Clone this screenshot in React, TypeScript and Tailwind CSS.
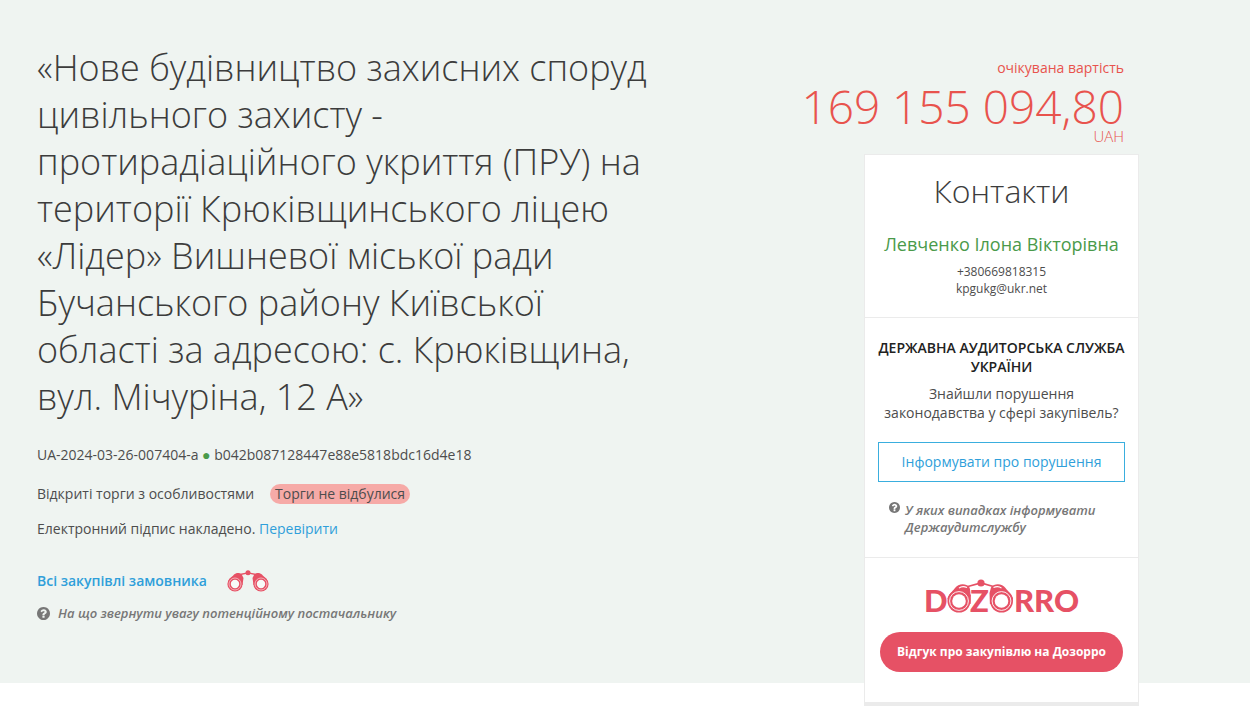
import React from 'react';

const CORAL = '#e65165';

function Lens({ cx, cy, flip = false }: { cx: number; cy: number; flip?: boolean }) {
  return (
    <g transform={`translate(${cx} ${cy}) scale(${flip ? -1 : 1} 1)`}>
      <path
        d="M-11.5 -2 C-11 -6 -7 -9 -4 -13 C-1 -17.5 7 -18.5 10.5 -13.5 L12 -8 L11.600 3 Z"
        fill={CORAL}
      />
      <path d="M0 -12.800 C2 -14.600 5 -14.800 8 -13.500" fill="none" stroke="#ffffff" strokeWidth="1.1" />
      <circle r="11.5" fill={CORAL} />
      <circle r="9.4" fill="none" stroke="#ffffff" strokeWidth="0.9" />
      <circle r="6.8" fill="#ffffff" />
    </g>
  );
}

function DozorroLogo() {
  return (
    <svg width="156" height="44" viewBox="0 0 156 44" className="-mb-2" role="img" aria-label="Dozorro">
      <path d="M42 9 L57 5 L71 9" fill="none" stroke={CORAL} strokeWidth="1.8" />
      <circle cx="57" cy="5" r="3.6" fill={CORAL} />
      <Lens cx={35} cy={23} />
      <Lens cx={77.5} cy={23} flip />
      <g fill={CORAL} fontFamily="Lato, sans-serif" fontWeight="900" fontSize="31">
        <text x="0" y="34">D</text>
        <text x="46" y="34" stroke="#ffffff" strokeWidth="1.6" paintOrder="stroke">Z</text>
        <text x="90" y="34">R</text>
        <text x="110" y="34">R</text>
        <text x="130" y="34">O</text>
      </g>
    </svg>
  );
}

function Binoculars() {
  return (
    <svg width="42" height="22" viewBox="0 0 42 22" aria-hidden="true">
      <path
        d="M1 12 C2 8 5 7 7 4.500 C9 2.500 13 2 15 5 L16.500 8 L15.500 15 Z M41 12 C40 8 37 7 35 4.500 C33 2.500 29 2 27 5 L25.500 8 L26.500 15 Z"
        fill={CORAL}
      />
      <path d="M13 4.500 L21 2.800 L29 4.500" fill="none" stroke={CORAL} strokeWidth="1.3" />
      <circle cx="21" cy="2.8" r="2.5" fill={CORAL} />
      {[8, 34].map((x) => (
        <g key={x}>
          <circle cx={x} cy="14" r="7.600" fill={CORAL} />
          <circle cx={x} cy="14" r="6" fill="none" stroke="#f6c6cb" strokeWidth="0.8" />
          <circle cx={x} cy="14" r="4.200" fill="#f7faf8" />
        </g>
      ))}
    </svg>
  );
}

function QuestionIcon({ className }: { className: string }) {
  return (
    <svg viewBox="0 0 1536 1536" className={className} fill="#777777" aria-hidden="true">
      <path d="M896 1248v-192q0-14-9-23t-23-9H672q-14 0-23 9t-9 23v192q0 14 9 23t23 9h192q14 0 23-9t9-23zm256-672q0-88-55.500-163t-138.500-116-170-41q-243 0-371 213-15 24 8 42l132 100q7 6 19 6 16 0 25-12 53-68 86-92 34-24 86-24 48 0 85.500 26t37.500 59q0 38-20 61t-68 45q-63 28-115.500 86.500t-52.500 125.500v36q0 14 9 23t23 9h192q14 0 23-9t9-23q0-19 21.500-49.500t54.500-49.500q32-18 49-28.500t46-35 44.500-48 28-60.500 12.500-81zm384 192q0 209-103 385.500t-279.500 279.500-385.500 103-385.500-103-279.500-279.500-103-385.500 103-385.500 279.500-279.500 385.500-103 385.500 103 279.500 279.500 103 385.500z" />
    </svg>
  );
}

export default function App() {
  return (
    <div className="min-h-screen bg-white font-['Open_Sans',sans-serif] text-sm leading-5 text-[#4d4d4d]">
      <main className="flex items-start justify-between bg-[#eff4f1] pl-[37px] pr-[111px]">
        <section className="w-[632px] pt-11">
          <h1 className="text-[36px] font-light leading-[47px] text-[#3c3c3c]">
            «Нове будівництво захисних споруд цивільного захисту - протирадіаційного укриття (ПРУ) на
            території Крюківщинського ліцею «Лідер» Вишневої міської ради Бучанського району
            Київської області за адресою: с. Крюківщина, вул. Мічуріна, 12 А»
          </h1>
          <p className="mt-[25px]">
            UA-2024-03-26-007404-a <span className="text-[#4a9a4a]">●</span>{' '}
            b042b087128447e88e5818bdc16d4e18
          </p>
          <p className="mt-[19px] flex items-center gap-4">
            Відкриті торги з особливостями
            <span className="rounded-full bg-[#f6aaa7] px-[5px]">Торги не відбулися</span>
          </p>
          <p className="mt-[15px]">
            Електронний підпис накладено.{' '}
            <a href="#verify" className="text-[#2f9fda]">Перевірити</a>
          </p>
          <div className="mt-[31px] flex items-center gap-5">
            <a href="#all" className="font-semibold text-[#2f9fda]">Всі закупівлі замовника</a>
            <Binoculars />
          </div>
          <a href="#tips" className="mt-[11px] flex items-center gap-2 text-[13px] font-semibold italic text-[#777777]">
            <QuestionIcon className="size-[13px]" />
            На що звернути увагу потенційному постачальнику
          </a>
        </section>

        <aside className="-mb-[23px] flex flex-col items-end pt-[58px]">
          <div className="flex flex-col items-end pr-[15px] text-[#e8534d]">
            <span>очікувана вартість</span>
            <strong className="text-[46px] font-light leading-[56px]">169 155 094,80</strong>
            <span className="-mt-2 text-[15px] font-light leading-5">UAH</span>
          </div>
          <div className="mt-2 w-[275px] border border-b-4 border-[#ebebeb] bg-white text-center">
            <section className="pb-5 pt-4">
              <h2 className="text-[32px] font-light leading-10 text-[#3c3c3c]">Контакти</h2>
              <h3 className="mt-[19px] text-lg leading-7 text-[#4a9a4a]">Левченко Ілона Вікторівна</h3>
              <p className="mt-[5px] text-xs leading-[17px]">
                +380669818315
                <br />
                kpgukg@ukr.net
              </p>
            </section>
            <section className="border-t border-[#ebebeb] px-[13px] pb-[21px] pt-5">
              <h3 className="text-sm font-semibold leading-[19px] text-[#222222]">
                ДЕРЖАВНА АУДИТОРСЬКА СЛУЖБА УКРАЇНИ
              </h3>
              <p className="mt-2 leading-[19px]">
                Знайшли порушення
                <br />
                законодавства у сфері закупівель?
              </p>
              <button type="button" className="mt-5 h-10 w-full border border-[#3aaede] text-[#2f9fda]">
                Інформувати про порушення
              </button>
              <a href="#cases" className="mt-5 flex items-start gap-[5px] pl-[11px] text-left text-[13px] font-semibold italic leading-[17px] text-[#777777]">
                <QuestionIcon className="size-[11px] shrink-0" />
                <span>
                  У яких випадках інформувати
                  <br />
                  Держаудитслужбу
                </span>
              </a>
            </section>
            <section className="flex flex-col items-center border-t border-[#ebebeb] px-[15px] pb-[30px] pt-5">
              <DozorroLogo />
              <button type="button" className="mt-[18px] h-10 w-full rounded-full bg-[#e65165] text-xs font-bold text-white">
                Відгук про закупівлю на Дозорро
              </button>
            </section>
          </div>
        </aside>
      </main>
    </div>
  );
}
